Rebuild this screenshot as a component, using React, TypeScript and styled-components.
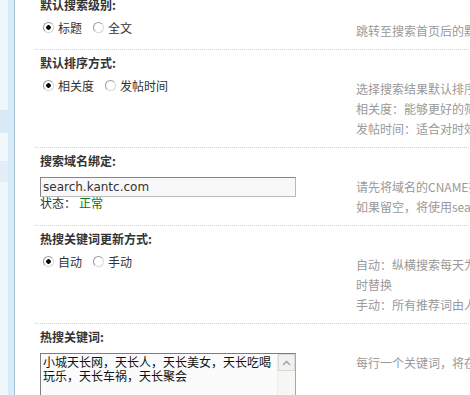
import React from 'react';
import styled, { createGlobalStyle } from 'styled-components';

const GlobalStyle = createGlobalStyle`
  html, body {
    margin: 0;
    padding: 0;
    background: #ffffff;
    overflow: hidden;
  }
  body {
    font-family: "Noto Sans CJK SC", "DejaVu Sans", sans-serif;
    font-size: 12px;
    color: #333333;
  }
`;

const Page = styled.div`
  display: flex;
  width: 470px;
  height: 395px;
  overflow: hidden;
`;

const Sidebar = styled.div`
  flex: none;
  width: 14px;
  height: 395px;
  border-right: 1px solid #a3c0d4;
  display: flex;
  flex-direction: column;
`;

const SideItem = styled.div<{ height: number; tone: string }>`
  height: ${(props) => props.height}px;
  flex: ${(props) => (props.height === 0 ? '1' : 'none')};
  background: linear-gradient(
    to right,
    ${(props) => props.tone} 0,
    ${(props) => props.tone} 8px,
    #d9ebf6 8px,
    #d9ebf6 14px
  );
`;

const Main = styled.div`
  flex: none;
  width: 720px;
  margin-top: -9px;
  padding-left: 20px;
`;

const Section = styled.div`
  border-top: 1px dotted #c9d5de;
  padding-left: 5px;
`;

const Title = styled.div`
  padding-top: 4px;
  line-height: 18px;
  font-weight: bold;
  color: #333333;
`;

const Row = styled.div`
  display: grid;
  grid-template-columns: 256px 1fr;
  column-gap: 60px;
  padding: 7px 0 8px;
  align-items: start;
`;

const Tips = styled.div`
  line-height: 20px;
  color: #999999;
  white-space: nowrap;
`;

const RadioGroup = styled.div`
  display: flex;
  align-items: center;
  height: 13px;
`;

const RadioLabel = styled.label`
  display: flex;
  align-items: center;
  margin-right: 8px;
  line-height: 13px;
  color: #333333;
`;

const RadioDot = styled.span<{ checked: boolean }>`
  box-sizing: border-box;
  width: 11px;
  height: 11px;
  margin: 0 4px 0 3px;
  border-radius: 50%;
  border: 1px solid #9a9a9a;
  border-right-color: #d8d8d8;
  border-bottom-color: #d8d8d8;
  background: ${(props) =>
    props.checked
      ? 'radial-gradient(circle, #000 0, #000 2px, #fff 2.5px)'
      : '#ffffff'};
`;

const TextInput = styled.input`
  box-sizing: border-box;
  display: block;
  width: 256px;
  height: 20px;
  margin: 0;
  padding: 0 2px;
  border: 1px solid #858585;
  border-right-color: #b9b9b9;
  border-bottom-color: #b9b9b9;
  background: #f8f8f8;
  font-family: "DejaVu Sans", sans-serif;
  font-size: 12px;
  color: #333333;
  outline: none;
`;

const Status = styled.div`
  line-height: 12px;
  color: #333333;
`;

const StatusOk = styled.span`
  margin-left: 3px;
  color: #0a7a0a;
`;

const AreaBox = styled.div`
  box-sizing: border-box;
  display: flex;
  width: 256px;
  height: 100px;
  border: 1px solid #7d7d7d;
  border-right-color: #a8a8a8;
  background: #fbfbfb;
`;

const Area = styled.textarea`
  flex: 1;
  min-width: 0;
  margin: 0;
  padding: 1px 2px;
  border: none;
  resize: none;
  overflow: hidden;
  background: transparent;
  font-family: "Noto Sans CJK SC", sans-serif;
  font-size: 12px;
  line-height: 14px;
  color: #111111;
  outline: none;
`;

const ScrollTrack = styled.div`
  flex: none;
  width: 17px;
  background: #f6f6f3;
  border-left: 1px solid #ececec;
`;

const ScrollButton = styled.div`
  box-sizing: border-box;
  height: 17px;
  display: flex;
  align-items: center;
  justify-content: center;
  border: 1px solid #d9d9d9;
  background: #f1f1f1;
`;

const sidebarItems = [
  { height: 110, tone: '#eef7fc' },
  { height: 23, tone: '#d9e9f5' },
  { height: 28, tone: '#f2f9fd' },
  { height: 21, tone: '#e3eff8' },
  { height: 0, tone: '#eef7fc' }
];

interface RadioOption {
  label: string;
  checked?: boolean;
}

const Radios: React.FC<{ options: RadioOption[] }> = ({ options }) => (
  <RadioGroup>
    {options.map((option) => (
      <RadioLabel key={option.label}>
        <RadioDot checked={!!option.checked} />
        {option.label}
      </RadioLabel>
    ))}
  </RadioGroup>
);

const App: React.FC = () => {
  return (
    <>
      <GlobalStyle />
      <Page>
        <Sidebar>
          {sidebarItems.map((item, index) => (
            <SideItem key={index} height={item.height} tone={item.tone} />
          ))}
        </Sidebar>
        <Main>
          <Section>
            <Title>默认搜索级别:</Title>
            <Row>
              <Radios options={[{ label: '标题', checked: true }, { label: '全文' }]} />
              <Tips>跳转至搜索首页后的默认搜索级别</Tips>
            </Row>
          </Section>

          <Section>
            <Title>默认排序方式:</Title>
            <Row>
              <Radios
                options={[{ label: '相关度', checked: true }, { label: '发帖时间' }]}
              />
              <Tips>
                选择搜索结果默认排序方式
                <br />
                相关度：能够更好的筛选出用户想要的结果
                <br />
                发帖时间：适合对时效性要求较高的站点
              </Tips>
            </Row>
          </Section>

          <Section>
            <Title>搜索域名绑定:</Title>
            <Row>
              <div>
                <TextInput defaultValue="search.kantc.com" />
                <Status>
                  状态：<StatusOk>正常</StatusOk>
                </Status>
              </div>
              <Tips>
                请先将域名的CNAME指向 search.discuz.qq.com
                <br />
                如果留空，将使用search.discuz.qq.com
              </Tips>
            </Row>
          </Section>

          <Section>
            <Title>热搜关键词更新方式:</Title>
            <Row>
              <Radios options={[{ label: '自动', checked: true }, { label: '手动' }]} />
              <Tips>
                自动：纵横搜索每天为您推荐热词，并定
                <br />
                时替换
                <br />
                手动：所有推荐词由人工设置
              </Tips>
            </Row>
          </Section>

          <Section>
            <Title>热搜关键词:</Title>
            <Row>
              <AreaBox>
                <Area defaultValue="小城天长网，天长人，天长美女，天长吃喝玩乐，天长车祸，天长聚会" />
                <ScrollTrack>
                  <ScrollButton>
                    <svg width="9" height="6" viewBox="0 0 9 6">
                      <path d="M1 5 L4.5 1.5 L8 5" fill="none" stroke="#a9a9a9" strokeWidth="1.6" />
                    </svg>
                  </ScrollButton>
                </ScrollTrack>
              </AreaBox>
              <Tips>每行一个关键词，将在搜索首页显示</Tips>
            </Row>
          </Section>
        </Main>
      </Page>
    </>
  );
};

export default App;
